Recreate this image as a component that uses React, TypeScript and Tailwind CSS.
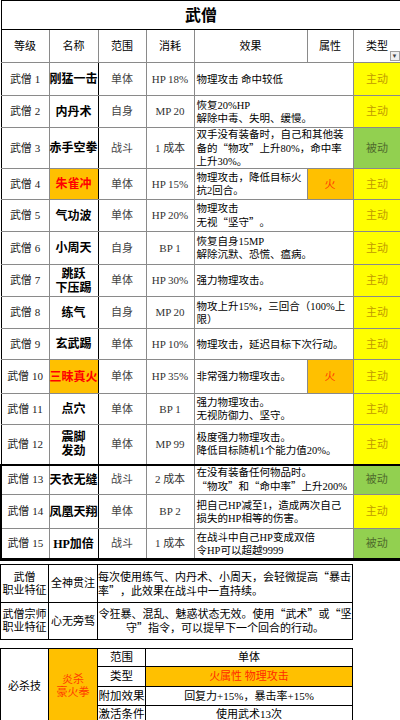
import React from "react";

type Skill = {
  lv: number;
  name: string[];
  hot?: boolean;
  range: string;
  cost: string;
  effect: string[];
  attr?: string;
  active: boolean;
  h: string;
};

const skills: Skill[] = [
  { lv: 1, name: ["刚猛一击"], range: "单体", cost: "HP 18%", effect: ["物理攻击 命中较低"], active: true, h: "h-[33px]" },
  { lv: 2, name: ["内丹术"], range: "自身", cost: "MP 20", effect: ["恢复20%HP", "解除中毒、失明、缓慢。"], active: true, h: "h-[32px]" },
  { lv: 3, name: ["赤手空拳"], range: "战斗", cost: "1 成本", effect: ["双手没有装备时，自己和其他装", "备的“物攻”上升80%，命中率", "上升30%。"], active: false, h: "h-[40px]" },
  { lv: 4, name: ["朱雀冲"], hot: true, range: "单体", cost: "HP 15%", effect: ["物理攻击，降低目标火", "抗2回合。"], attr: "火", active: true, h: "h-[31px]" },
  { lv: 5, name: ["气功波"], range: "单体", cost: "HP 20%", effect: ["物理攻击", "无视“坚守”。"], active: true, h: "h-[32px]" },
  { lv: 6, name: ["小周天"], range: "自身", cost: "BP 1", effect: ["恢复自身15MP", "解除沉默、恐慌、瘟病。"], active: true, h: "h-[33px]" },
  { lv: 7, name: ["跳跃", "下压踢"], range: "单体", cost: "HP 30%", effect: ["强力物理攻击。"], active: true, h: "h-[32px]" },
  { lv: 8, name: ["练气"], range: "自身", cost: "MP 20", effect: ["物攻上升15%，三回合（100%上", "限）"], active: true, h: "h-[32px]" },
  { lv: 9, name: ["玄武踢"], range: "单体", cost: "HP 10%", effect: ["物理攻击，延迟目标下次行动。"], active: true, h: "h-[31px]" },
  { lv: 10, name: ["三昧真火"], hot: true, range: "单体", cost: "HP 35%", effect: ["非常强力物理攻击。"], attr: "火", active: true, h: "h-[34px]" },
  { lv: 11, name: ["点穴"], range: "单体", cost: "BP 1", effect: ["强力物理攻击。", "无视防御力、坚守。"], active: true, h: "h-[31px]" },
  { lv: 12, name: ["震脚", "发劲"], range: "单体", cost: "MP 99", effect: ["极度强力物理攻击。", "降低目标随机1个能力值20%。"], active: true, h: "h-[40px]" },
  { lv: 13, name: ["天衣无缝"], range: "战斗", cost: "2 成本", effect: ["在没有装备任何物品时。", "“物攻”和“命中率”上升200%"], active: false, h: "h-[30px]" },
  { lv: 14, name: ["凤凰天翔"], range: "单体", cost: "BP 2", effect: ["把自己HP减至1，造成两次自己", "损失的HP相等的伤害。"], active: true, h: "h-[34px]" },
  { lv: 15, name: ["HP加倍"], range: "战斗", cost: "1 成本", effect: ["在战斗中自己HP变成双倍", "令HP可以超越9999"], active: false, h: "h-[31px]" },
];

const cell = "border border-[#8a8a8a] p-0 text-center align-middle";

// curly quotes are full width in the sheet's font
function Text({ s }: { s: string }) {
  const parts = s.split(/([“”])/);
  return (
    <>
      {parts.map((p, i) =>
        p === "“" || p === "”" ? (
          <span key={i} className="inline-block w-[1em] text-center font-['Noto_Sans_CJK_SC'] [font-feature-settings:'fwid']">
            {p}
          </span>
        ) : (
          <React.Fragment key={i}>{p}</React.Fragment>
        )
      )}
    </>
  );
}

function Lines({ lines }: { lines: string[] }) {
  return (
    <>
      {lines.map((l, i) => (
        <div key={i} className="whitespace-nowrap">
          <Text s={l} />
        </div>
      ))}
    </>
  );
}

export default function App() {
  return (
    <div
      className="w-[400px] bg-white text-[11px] leading-[13px] text-black"
      style={{ fontFamily: '"Liberation Serif", "Noto Sans CJK SC", serif' }}
    >
      <table className="w-[400px] table-fixed border-collapse">
        <colgroup>
          <col className="w-[48px]" />
          <col className="w-[49px]" />
          <col className="w-[48px]" />
          <col className="w-[48px]" />
          <col className="w-[113px]" />
          <col className="w-[46px]" />
          <col className="w-[48px]" />
        </colgroup>
        <tbody>
          <tr className="h-[29px]">
            <td colSpan={7} className="border border-black p-0 text-center text-[16px] font-bold">
              武僧
            </td>
          </tr>
          <tr className="h-[33px]">
            <td className={`${cell} border-l-black`}>等级</td>
            <td className={cell}>名称</td>
            <td className={cell}>范围</td>
            <td className={cell}>消耗</td>
            <td className={cell}>效果</td>
            <td className={cell}>属性</td>
            <td className={`${cell} relative border-l-black border-r-black`}>
              类型
              <span className="absolute bottom-[1px] right-[1px] flex h-[10px] w-[10px] items-center justify-center border border-[#a0a0a0] bg-[#f0f0f0] text-[6px] leading-none text-[#444]">
                ▼
              </span>
            </td>
          </tr>
          {skills.map((s) => {
            const boxed = s.lv >= 13;
            const top = s.lv === 13 ? "border-t-2 border-t-black" : "";
            const bottom = s.lv === 15 ? "border-b-[3px] border-b-black" : "";
            return (
              <tr key={s.lv} className={s.h}>
                <td className={`${cell} ${top} ${bottom} ${boxed ? "border-l-2 border-l-black" : "border-l-black"} text-[#222]`}>
                  武僧 {s.lv}
                </td>
                <td
                  className={`${cell} ${top} ${bottom} border-l-black border-r-black text-[12px] font-bold leading-[14px] ${
                    s.hot ? "bg-[#ffc000] text-[#ff0000]" : ""
                  }`}
                >
                  <Lines lines={s.name} />
                </td>
                <td className={`${cell} ${top} ${bottom} text-[#444]`}>{s.range}</td>
                <td className={`${cell} ${top} ${bottom} text-[#333]`}>{s.cost}</td>
                <td
                  colSpan={s.attr ? 1 : 2}
                  className={`${cell} ${top} ${bottom} px-[2px] text-left text-[10.5px] leading-[13px]`}
                >
                  <Lines lines={s.effect} />
                </td>
                {s.attr && (
                  <td className={`${cell} ${top} ${bottom} bg-[#ffc000] text-[#ff3b00]`}>{s.attr}</td>
                )}
                <td
                  className={`${cell} ${top} ${bottom} border-l-black ${boxed ? "border-r-2 border-r-black" : "border-r-black"} ${
                    s.active ? "bg-[#ffff00] text-[#bf9a00]" : "bg-[#92d050] text-[#4f6a2c]"
                  }`}
                >
                  {s.active ? "主动" : "被动"}
                </td>
              </tr>
            );
          })}
        </tbody>
      </table>

      <table className="mt-[3px] w-[352px] table-fixed border-collapse">
        <colgroup>
          <col className="w-[48px]" />
          <col className="w-[49px]" />
          <col className="w-[255px]" />
        </colgroup>
        <tbody>
          <tr className="h-[38px]">
            <td className={`${cell} border-black`}>
              <Lines lines={["武僧", "职业特征"]} />
            </td>
            <td className={`${cell} border-black`}>全神贯注</td>
            <td className={`${cell} border-black text-left`}>
              <Lines lines={["每次使用练气、内丹术、小周天，会轻微提高“暴击", "率”，此效果在战斗中一直持续。"]} />
            </td>
          </tr>
          <tr className="h-[37px]">
            <td className={`${cell} border-black`}>
              <Lines lines={["武僧宗师", "职业特征"]} />
            </td>
            <td className={`${cell} border-black`}>心无旁骛</td>
            <td className={`${cell} border-black`}>
              <Lines lines={["令狂暴、混乱、魅惑状态无效。使用“武术”或“坚", "守”指令，可以提早下一个回合的行动。"]} />
            </td>
          </tr>
        </tbody>
      </table>

      <table className="mt-[8px] w-[352px] table-fixed border-collapse">
        <colgroup>
          <col className="w-[48px]" />
          <col className="w-[49px]" />
          <col className="w-[48px]" />
          <col className="w-[207px]" />
        </colgroup>
        <tbody>
          <tr className="h-[18px]">
            <td rowSpan={4} className={`${cell} border-black`}>
              必杀技
            </td>
            <td rowSpan={4} className={`${cell} border-black bg-[#ffc000] text-[#ff3b00]`}>
              <Lines lines={["炎杀", "豪火拳"]} />
            </td>
            <td className={`${cell} border-black whitespace-nowrap text-[11.5px]`}>范围</td>
            <td className={`${cell} border-black`}>单体</td>
          </tr>
          <tr className="h-[20px]">
            <td className={`${cell} border-black whitespace-nowrap text-[11.5px]`}>类型</td>
            <td className={`${cell} border-black bg-[#ffc000] text-[#ff2a00]`}>火属性 物理攻击</td>
          </tr>
          <tr className="h-[19px]">
            <td className={`${cell} border-black whitespace-nowrap text-[11.5px]`}>附加效果</td>
            <td className={`${cell} border-black`}>回复力+15%，暴击率+15%</td>
          </tr>
          <tr className="h-[18px]">
            <td className={`${cell} border-black whitespace-nowrap text-[11.5px]`}>激活条件</td>
            <td className={`${cell} border-black`}>使用武术13次</td>
          </tr>
        </tbody>
      </table>
    </div>
  );
}
